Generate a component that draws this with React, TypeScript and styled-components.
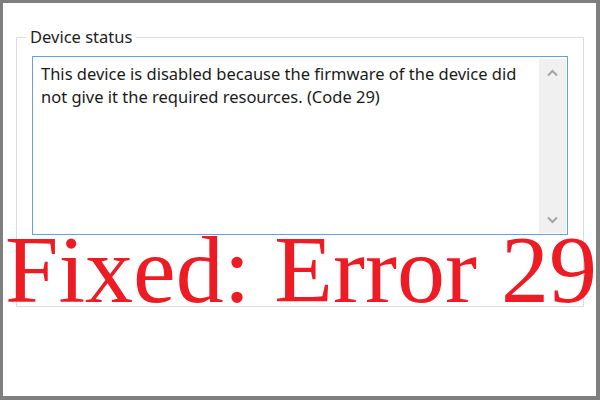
import React from 'react';
import styled, { createGlobalStyle } from 'styled-components';

const GlobalStyle = createGlobalStyle`
  html, body {
    margin: 0;
    padding: 0;
    background: #ffffff;
  }
  * {
    box-sizing: border-box;
  }
`;

const Frame = styled.div`
  position: relative;
  width: 600px;
  height: 400px;
  background: #ffffff;
  border-style: solid;
  border-color: #7f7f7f;
  border-width: 3px 4px 4px 3px;
  overflow: hidden;
`;

const GroupBox = styled.fieldset`
  width: 568px;
  height: 280px;
  margin: 24px 0 0 13px;
  padding: 9px 15px 0 15px;
  border: 1px solid #dcdcdc;
  min-inline-size: 0;
`;

const Legend = styled.legend`
  margin-left: -6px;
  padding: 0 4px;
  font-family: 'Noto Sans', 'Open Sans', sans-serif;
  font-size: 16.5px;
  line-height: 20px;
  color: #1e1e1e;
`;

const TextBox = styled.div`
  display: flex;
  width: 536px;
  height: 179px;
  border: 1px solid #63a1e0;
  background: #ffffff;
`;

const StatusText = styled.div`
  flex: 1;
  padding: 5px 8px 0 8px;
  font-family: 'Noto Sans', 'Open Sans', sans-serif;
  font-size: 16.5px;
  line-height: 23px;
  color: #1a1a1a;
`;

const ScrollBar = styled.div`
  display: flex;
  flex-direction: column;
  justify-content: space-between;
  width: 27px;
  margin: 2px 1px 1px 0;
  background: #f0f0f0;
`;

const ScrollArrow = styled.div`
  display: flex;
  align-items: center;
  justify-content: center;
  height: 27px;
`;

const Headline = styled.div`
  position: absolute;
  left: 2px;
  top: 219px;
  font-family: 'Liberation Serif', 'Times New Roman', serif;
  font-size: 96px;
  line-height: 1;
  color: #ed1c24;
  white-space: nowrap;
`;

function Chevron({ up }: { up?: boolean }) {
  return (
    <svg width="11" height="8" viewBox="0 0 11 8">
      <path
        d={up ? 'M1 6.5 L5.5 2 L10 6.5' : 'M1 1.5 L5.5 6 L10 1.5'}
        fill="none"
        stroke="#a3a3a3"
        strokeWidth="2"
      />
    </svg>
  );
}

function App() {
  return (
    <>
      <GlobalStyle />
      <Frame>
        <GroupBox>
          <Legend>Device status</Legend>
          <TextBox>
            <StatusText>
              This device is disabled because the firmware of the device did
              <br />
              not give it the required resources. (Code 29)
            </StatusText>
            <ScrollBar>
              <ScrollArrow>
                <Chevron up />
              </ScrollArrow>
              <ScrollArrow>
                <Chevron />
              </ScrollArrow>
            </ScrollBar>
          </TextBox>
        </GroupBox>
        <Headline>Fixed: Error 29</Headline>
      </Frame>
    </>
  );
}

export default App;
